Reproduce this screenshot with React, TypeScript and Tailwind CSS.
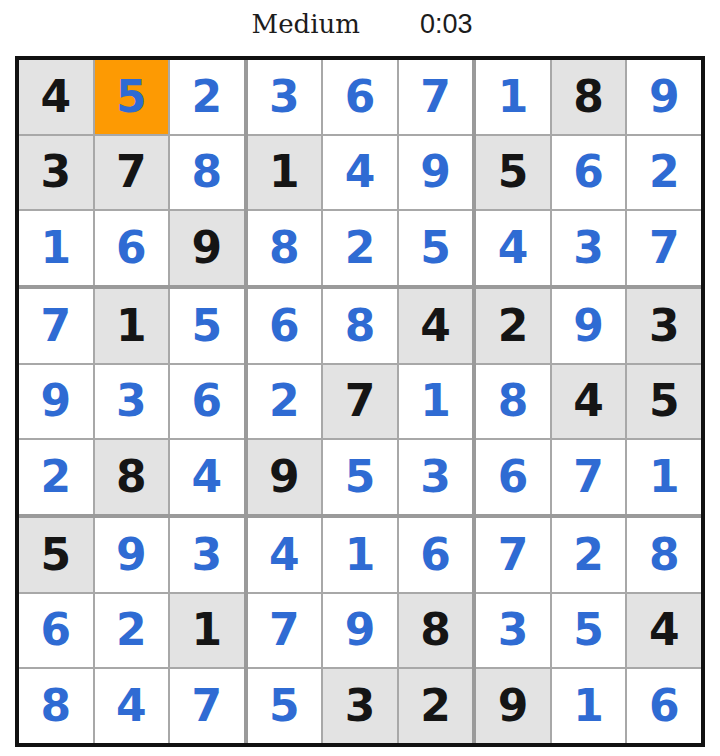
import React from 'react';

// digits of the solved board; "g" marks a given (pre-filled) cell
const BOARD: string[] = [
  '4g 5 2 3 6 7 1 8g 9',
  '3g 7g 8 1g 4 9 5g 6 2',
  '1 6 9g 8 2 5 4 3 7',
  '7 1g 5 6 8 4g 2g 9 3g',
  '9 3 6 2 7g 1 8 4g 5g',
  '2 8g 4 9g 5 3 6 7 1',
  '5g 9 3 4 1 6 7 2 8',
  '6 2 1g 7 9 8g 3 5 4g',
  '8 4 7 5 3g 2g 9g 1 6',
];

type Cell = { value: string; given: boolean };

const cells: Cell[][] = BOARD.map((row) =>
  row.split(' ').map((c) => ({ value: c[0], given: c.endsWith('g') }))
);

const SELECTED = { row: 0, col: 1 };

function SudokuCell({ cell, selected }: { cell: Cell; selected: boolean }) {
  const bg = selected ? 'bg-[#fd9a03]' : cell.given ? 'bg-[#e3e3e3]' : 'bg-white';
  const color = cell.given ? 'text-[#151515]' : 'text-[#2f6bd3]';
  return (
    <div
      className={`${bg} ${color} flex items-center justify-center text-[44px] font-bold leading-none`}
      style={{ fontFamily: '"DejaVu Sans", sans-serif' }}
    >
      {cell.value}
    </div>
  );
}

export default function App() {
  const boxes = [0, 1, 2, 3, 4, 5, 6, 7, 8];

  return (
    <div className="w-[720px] h-[756px] bg-white flex flex-col items-center">
      {/* Header */}
      <div className="h-[56px] w-full flex items-center justify-center gap-[60px] pb-[8px] pl-[4px]">
        <span className="text-[26px] text-[#1c1c1c]" style={{ fontFamily: '"DejaVu Serif", serif' }}>
          Medium
        </span>
        <span className="text-[27px] text-[#1c1c1c]" style={{ fontFamily: '"Liberation Sans", Arial, sans-serif' }}>
          0:03
        </span>
      </div>

      {/* Board */}
      <div className="w-[690px] h-[691px] border-[4px] border-[#111] bg-[#9a9a9a] grid grid-cols-3 grid-rows-3 gap-[4px]">
        {boxes.map((b) => {
          const br = Math.floor(b / 3) * 3;
          const bc = (b % 3) * 3;
          return (
            <div key={b} className="bg-[#a8a8a8] grid grid-cols-3 grid-rows-3 gap-[2px]">
              {[0, 1, 2].flatMap((r) =>
                [0, 1, 2].map((c) => {
                  const row = br + r;
                  const col = bc + c;
                  return (
                    <SudokuCell
                      key={`${row}-${col}`}
                      cell={cells[row][col]}
                      selected={row === SELECTED.row && col === SELECTED.col}
                    />
                  );
                })
              )}
            </div>
          );
        })}
      </div>
    </div>
  );
}
